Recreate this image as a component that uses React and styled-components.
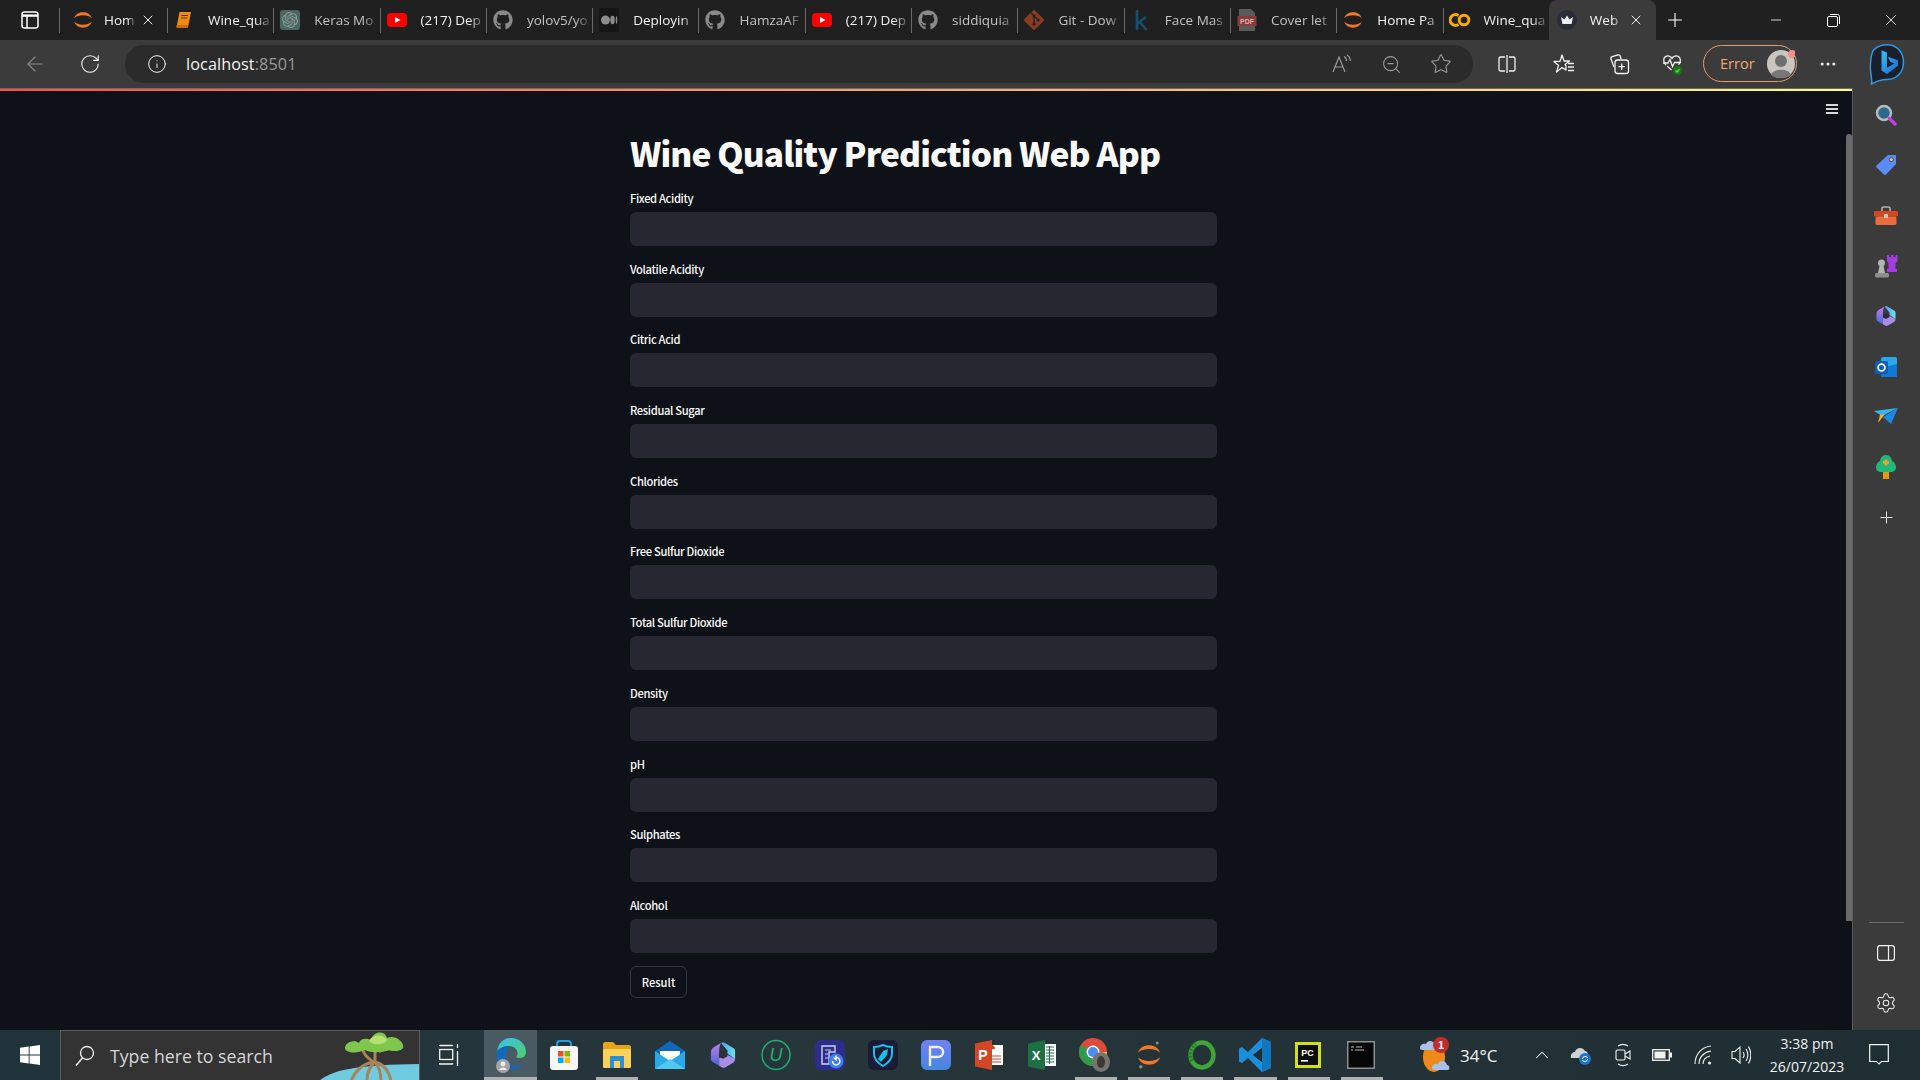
import React from "react";
import styled, { createGlobalStyle } from "styled-components";
import {
  ArrowLeft,
  RotateCw,
  Info,
  Star,
  ZoomOut,
  Plus,
  X,
  Minus,
  Settings,
  ChevronUp,
  Ellipsis,
} from "lucide-react";
import { FaGithub } from "react-icons/fa";
import { SiOpenai, SiGit } from "react-icons/si";

const UI_FONT = `"Open Sans", "Noto Sans", sans-serif`;
const APP_FONT = `"Noto Sans CJK SC", "Noto Sans", sans-serif`;

const GlobalStyle = createGlobalStyle`
  html, body {
    margin: 0;
    padding: 0;
    background: #0e1117;
    overflow: hidden;
  }
  * {
    box-sizing: border-box;
  }
`;

/* ---------- small logos ---------- */

const Jupyter = ({ size = 22, dots }) => (
  <svg width={size} height={size} viewBox="0 0 24 24">
    <path d="M2.500 10C5 1.500 19 1.500 21.500 10C17.500 5.800 6.500 5.800 2.500 10Z" fill="#f37726" />
    <path d="M2.500 14C5 22.500 19 22.500 21.500 14C17.500 18.200 6.500 18.200 2.500 14Z" fill="#f37726" />
    {dots && <circle cx="19" cy="1.800" r="1.300" fill="#8a8a8a" />}
    {dots && <circle cx="5" cy="22" r="1.500" fill="#8a8a8a" />}
  </svg>
);

const Book = () => (
  <svg width="20" height="20" viewBox="0 0 20 20">
    <path d="M5.500 2H17L14.500 15H3Z" fill="#f08c16" />
    <path d="M3 15H14.500L14 18H3.400C1.800 18 2 15.400 3 15Z" fill="#c96d0a" />
    <path d="M7.500 5.500H14M7 8H13.400" stroke="#5a3200" strokeWidth="1.200" />
  </svg>
);

const OpenAiTile = () => (
  <TileBox $bg="#4a6660" $color="#8f9c98" $size={20} $radius={3}>
    <SiOpenai size={16} />
  </TileBox>
);

const YouTube = () => (
  <svg width="20" height="20" viewBox="0 0 20 20">
    <rect y="3" width="20" height="14" rx="4" fill="#f00" />
    <path d="M8 7L13.500 10L8 13Z" fill="#fff" />
  </svg>
);

const MediumTile = () => (
  <svg width="20" height="24" viewBox="0 0 20 24">
    <rect width="20" height="24" rx="2" fill="#151515" />
    <circle cx="6.500" cy="12" r="4.500" fill="#8b8b8b" />
    <ellipse cx="13.500" cy="12" rx="2.200" ry="4.200" fill="#8b8b8b" />
    <ellipse cx="17.500" cy="12" rx="0.800" ry="3.800" fill="#8b8b8b" />
  </svg>
);

const KaggleMark = () => (
  <svg width="14" height="22" viewBox="0 0 14 22" fill="none" stroke="#15506e" strokeWidth="2.600">
    <path d="M3 1V21M12 8L3.500 14.500M5.500 12.500L12.500 21" />
  </svg>
);

const Pdf = () => (
  <svg width="20" height="24" viewBox="0 0 20 24">
    <path d="M2 1H14L18 5V23H2Z" fill="#5a5a5a" />
    <rect x="0.500" y="8" width="19" height="10" fill="#8b3a3a" />
    <text x="10" y="16" fontFamily="Liberation Sans" fontSize="7" fontWeight="700" fill="#d8b4b4" textAnchor="middle">PDF</text>
  </svg>
);

const Colab = () => (
  <svg width="22" height="16" viewBox="0 0 22 16">
    <path d="M9.500 3.500A5.400 5.400 0 1 0 9.500 12.500" fill="none" stroke="#f9ab00" strokeWidth="3" />
    <circle cx="15" cy="8" r="4.800" fill="none" stroke="#f9ab00" strokeWidth="3" />
  </svg>
);

const Crown = () => (
  <svg width="20" height="20" viewBox="0 0 20 20">
    <circle cx="10" cy="10" r="10" fill="#2a2c3a" />
    <path d="M4 7L7.400 9.500L10 5.500L12.600 9.500L16 7L14.600 14H5.400Z" fill="#eee" />
  </svg>
);

const WindowToggle = () => (
  <svg width="18" height="18" viewBox="0 0 18 18" fill="none" stroke="#fff" strokeWidth="1.500">
    <rect x="1" y="1" width="16" height="16" rx="2.500" />
    <path d="M1 4.600H17" strokeWidth="2.400" />
    <path d="M6 5V17" />
  </svg>
);

const Restore = () => (
  <svg width="13" height="13" viewBox="0 0 13 13" fill="none" stroke="#fff">
    <rect x="0.500" y="2.500" width="10" height="10" rx="1.500" />
    <path d="M3 0.500H10.500C11.600 0.500 12.500 1.400 12.500 2.500V10" />
  </svg>
);

const ReadAloud = () => (
  <svg width="22" height="20" viewBox="0 0 22 20" fill="none" stroke="#9a9a9a" strokeWidth="1.200">
    <path d="M2 18L8 3L14 18M4.200 13H11.800" />
    <path d="M13 2.500C15 3.500 15.500 5 15.500 7M16 1C18.600 2.400 19.300 4.500 19.300 7" />
  </svg>
);

const Split = () => (
  <svg width="20" height="20" viewBox="0 0 20 20" fill="none" stroke="#f2f2f2" strokeWidth="1.300">
    <path d="M8 3H3.500C2.700 3 2 3.700 2 4.500V15.500C2 16.300 2.700 17 3.500 17H8M12 3H16.500C17.300 3 18 3.700 18 4.500V15.500C18 16.300 17.300 17 16.500 17H12" />
    <path d="M10 1V19" />
  </svg>
);

const Favorites = () => (
  <svg width="22" height="22" viewBox="0 0 22 22" fill="none" stroke="#f2f2f2" strokeWidth="1.300">
    <path d="M9 2L11 8H16.500L12 11.500L13 13V17L9 14.600L3.500 19L5.600 12.400L1 8.400H7Z" strokeLinejoin="round" />
    <path d="M15 10.500H21M15 14H21M15 17.500H21" />
  </svg>
);

const Collections = () => (
  <svg width="22" height="22" viewBox="0 0 22 22" fill="none" stroke="#f2f2f2" strokeWidth="1.300">
    <path d="M6 14L3 6C2.700 5 3.200 4 4.200 3.700L10 2C11 1.800 12 2.300 12.300 3.300L13 6" />
    <rect x="7" y="7" width="13.500" height="13.500" rx="2.500" />
    <path d="M13.700 10.500V17M10.500 13.700H17" />
  </svg>
);

const Health = () => (
  <svg width="24" height="24" viewBox="0 0 24 24" fill="none" stroke="#f2f2f2" strokeWidth="1.300">
    <path d="M5 13C2 10 2 6 4.500 4.600C7 3.200 9.800 4.200 11 6.400C12.200 4.200 15 3.200 17.500 4.600C20 6 20 10 17.500 12.800" />
    <path d="M2 11H7L9 7.500L11.500 14.500L13.500 10.500H20" />
    <path d="M6 14L10.500 18" />
    <circle cx="16.500" cy="18.500" r="4.500" fill="#107c10" stroke="none" />
    <path d="M14.500 18.500L16 20L18.500 17.300" stroke="#7bd07b" />
  </svg>
);

const Avatar = () => (
  <svg width="28" height="28" viewBox="0 0 28 28">
    <circle cx="14" cy="14" r="14" fill="#c9c6c0" />
    <circle cx="14" cy="11" r="6" fill="#6e6e6c" />
    <path d="M4 25C6 18 22 18 24 25C20 29 8 29 4 25Z" fill="#777" />
    <circle cx="25" cy="4" r="4" fill="#f38f8f" />
  </svg>
);

const Bing = () => (
  <svg width="38" height="42" viewBox="0 0 40 46">
    <defs>
      <linearGradient id="bingb" x1="0" y1="0" x2="1" y2="1">
        <stop offset="0" stopColor="#37bdf8" />
        <stop offset="1" stopColor="#1b66d2" />
      </linearGradient>
    </defs>
    <path
      d="M20 2C31 2 38 10 38 21C38 32 31 40 20 40C14 40 8 42 3 45C4 40 2.500 36 2 31C1.500 26 2 10 6 7C10 3.500 15 2 20 2Z"
      fill="#1a1f2a"
      stroke="#2d9be8"
      strokeWidth="1.600"
    />
    <path d="M14 8L20 10.500V27L28 22.500L23.500 20.500L21 15L32 19V25L20 34L14 30Z" fill="url(#bingb)" />
  </svg>
);

const MenuBars = () => (
  <svg width="12" height="10" viewBox="0 0 12 10" fill="#d8d8d8">
    <rect width="12" height="2" />
    <rect y="4" width="12" height="2" />
    <rect y="8" width="12" height="2" />
  </svg>
);

/* side panel */

const SideSearch = () => (
  <svg width="22" height="22" viewBox="0 0 22 22">
    <circle cx="9" cy="9" r="7" fill="#2b6a8f" stroke="#b8bcc0" strokeWidth="2.400" />
    <path d="M14.500 14.500L20 20" stroke="#c23ee0" strokeWidth="3.400" strokeLinecap="round" />
  </svg>
);

const SideTag = () => (
  <svg width="22" height="22" viewBox="0 0 22 22">
    <path d="M13 1H20C20.600 1 21 1.400 21 2V10L11 20.500C10.400 21 9.600 21 9 20.500L1.500 13.500C1 13 1 12 1.500 11.500Z" fill="#5b8cf5" />
    <circle cx="16.300" cy="5.600" r="2" fill="#f3d23c" stroke="#33418a" />
  </svg>
);

const SideBox = () => (
  <svg width="24" height="20" viewBox="0 0 24 20">
    <path d="M8 5V2.500C8 1.500 9 1 10 1H14C15 1 16 1.500 16 2.500V5" fill="none" stroke="#b0b0b0" strokeWidth="1.600" />
    <rect y="5" width="24" height="5.500" rx="1" fill="#d3471f" />
    <rect x="1.500" y="10.500" width="21" height="8.500" rx="1.400" fill="#ea6b3f" />
    <rect x="10" y="8" width="4" height="4" rx="1" fill="#c8c8c8" />
  </svg>
);

const SideChess = () => (
  <svg width="24" height="24" viewBox="0 0 24 24">
    <path d="M13 1H15V3H17V1H19.500V3H21.500V1H23.500V7L21.500 9V15H23V18H13V15H14.500V9L13 7Z" fill="#a43ce0" />
    <circle cx="7.500" cy="9" r="3.500" fill="#b4b4b4" />
    <path d="M5.500 12H9.500L11 19H4Z" fill="#b4b4b4" />
    <rect x="1" y="19" width="14" height="4.500" rx="1.500" fill="#8f8f8f" />
  </svg>
);

const Copilot = ({ size = 22 }) => (
  <svg width={size} height={size} viewBox="0 0 22 22">
    <defs>
      <linearGradient id={`cpa${size}`} x1="0" y1="0" x2="0" y2="1">
        <stop offset="0" stopColor="#c17ee8" />
        <stop offset="1" stopColor="#4a68d8" />
      </linearGradient>
      <linearGradient id={`cpb${size}`} x1="0" y1="0" x2="1" y2="0">
        <stop offset="0" stopColor="#4ea0f0" />
        <stop offset="1" stopColor="#6fe0f0" />
      </linearGradient>
    </defs>
    <path d="M9.500 1.500C10.500 1 11.500 1 12.500 1.500L19 5.500C20 6 20.500 7 20.500 8V14L14.500 10V7.500Z" fill={`url(#cpb${size})`} />
    <path d="M9.500 1.500L4 4.800C2.500 5.800 1.500 7 1.500 9V13.500C1.500 15 2.200 16 3.500 16.800L8 19.500V8C8 5 8.500 3 9.500 1.500Z" fill={`url(#cpa${size})`} />
    <path d="M8 19.500L10 20.600C11 21.200 12 21.200 13 20.600L19 17C20 16.400 20.500 15.500 20.500 14L13.500 10.500L8 13.500Z" fill="#a98ce6" />
    <path d="M8 9.800L11 8L14.500 10L14.500 12L11 14L8 12.500Z" fill="#2c3138" />
  </svg>
);

const SideOutlook = () => (
  <svg width="22" height="22" viewBox="0 0 22 22">
    <rect x="6" y="1" width="16" height="20" rx="1.500" fill="#28a8ea" />
    <path d="M6 12L22 8V21H7.500C6.700 21 6 20.300 6 19.500Z" fill="#0f78d4" />
    <rect y="5" width="13" height="13" rx="1.600" fill="#0a5fb4" />
    <circle cx="6.500" cy="11.500" r="3.400" fill="none" stroke="#fff" strokeWidth="1.700" />
  </svg>
);

const SideSend = () => (
  <svg width="24" height="18" viewBox="0 0 24 18">
    <path d="M0 3L24 0L8 8Z" fill="#35b6f2" />
    <path d="M24 0L17 16L9 9Z" fill="#1d89e6" />
    <path d="M6 7L11 6L4 15Z" fill="#f3b11c" />
  </svg>
);

const SideTree = () => (
  <svg width="20" height="24" viewBox="0 0 20 24">
    <rect x="7" y="16" width="6" height="8" fill="#e19a0c" />
    <path d="M10 0C14 0 15.500 3 16 6C18.500 7 20 10 20 12.500C20 15.500 17.500 17 15 17H5C2.500 17 0 15.500 0 12.500C0 10 1.500 7 4 6C4.500 3 6 0 10 0Z" fill="#21b77a" />
    <path d="M10 4.500V10.500M7 7.500H13" stroke="#f3a41c" strokeWidth="2.400" />
  </svg>
);

const SidePanelIcon = () => (
  <svg width="18" height="16" viewBox="0 0 18 16" fill="none" stroke="#f2f2f2" strokeWidth="1.200">
    <rect x="0.600" y="0.600" width="16.800" height="14.800" rx="2.400" />
    <path d="M11.500 0.600V15.400" />
  </svg>
);

/* taskbar */

const WinLogo = () => (
  <svg width="20" height="20" viewBox="0 0 20 20" fill="#fff">
    <path d="M0 2.800L8.700 1.600V9.500H0ZM9.600 1.500L20 0V9.500H9.600ZM0 10.500H8.700V18.500L0 17.300ZM9.600 10.500H20V20L9.600 18.600Z" />
  </svg>
);

const SearchGlass = () => (
  <svg width="20" height="22" viewBox="0 0 20 22" fill="none" stroke="#f0f0f0" strokeWidth="1.300">
    <circle cx="12" cy="8" r="6.500" />
    <path d="M7.500 13L1 20.500" strokeWidth="1.600" />
  </svg>
);

const SearchArt = () => (
  <svg width="100" height="50" viewBox="0 0 100 50">
    <path d="M0 50C14 38 40 34 100 33V50Z" fill="#6fcbe0" />
    <path d="M44 19C46 27 52 28 54 31C44 33 36 40 32 50M56 18L56 31C50 36 48 42 48 50M56 31C60 36 62 42 62 50M56 31C64 33 70 40 72 50" fill="none" stroke="#a8845a" strokeWidth="3" />
    <path d="M60 21C64 18 72 18 78 19" fill="none" stroke="#a8845a" strokeWidth="2.400" />
    <path d="M26 17C26 11 36 8 40 12C42 6 50 8 52 9C54 0 66 -1 68 7C74 4 82 8 84 14C86 20 76 21 70 19C62 22 52 22 46 19C38 23 26 22 26 17Z" fill="#7fc74c" />
    <path d="M50 10C54 3 64 3 68 9C66 14 54 15 50 10Z" fill="#b6e070" />
  </svg>
);

const TaskView = () => (
  <svg width="20" height="24" viewBox="0 0 20 24" fill="none" stroke="#f2f2f2" strokeWidth="1.300">
    <rect x="0.700" y="6.500" width="13" height="10" />
    <path d="M0.500 2.500H13.500M0.500 21H13.500M0.500 2V3M13.500 2V3M0.500 20V21.500M13.500 20V21.500M18.500 1V5M18.500 8V23" />
  </svg>
);

const Edge = () => (
  <svg width="30" height="36" viewBox="0 0 30 36">
    <defs>
      <linearGradient id="edgea" x1="0" y1="0" x2="1" y2="1">
        <stop offset="0" stopColor="#35c1f1" />
        <stop offset="1" stopColor="#50d068" />
      </linearGradient>
    </defs>
    <path d="M1 15C2 5 9 1 15 1C24 1 30 8 30 15C30 21 24 22 20 20C24 16 20 9 13 9C7 9 2 12 1 15Z" fill="url(#edgea)" />
    <path d="M1 15C-1 24 5 32 16 32C21 32 25 30 27 27C21 30 14 29 11 23C9 18 11 12 13 9C7 9 2 12 1 15Z" fill="#1368b8" />
    <circle cx="7" cy="29" r="7" fill="#a4a4a4" />
    <circle cx="7" cy="27" r="2.400" fill="#ececec" />
    <path d="M3 33C4 29.500 10 29.500 11 33Z" fill="#ececec" />
  </svg>
);

const Store = () => (
  <svg width="28" height="30" viewBox="0 0 28 30">
    <path d="M7 8V4C7 2 8.500 1 10 1H18C19.500 1 21 2 21 4V8" fill="none" stroke="#18a0e0" strokeWidth="2" />
    <rect y="6" width="28" height="24" rx="3" fill="#f6f6f6" />
    <rect x="8" y="11" width="5.500" height="5.500" fill="#e8502c" />
    <rect x="14.500" y="11" width="5.500" height="5.500" fill="#7fba00" />
    <rect x="8" y="17.500" width="5.500" height="5.500" fill="#00a4ef" />
    <rect x="14.500" y="17.500" width="5.500" height="5.500" fill="#ffb900" />
  </svg>
);

const Explorer = () => (
  <svg width="28" height="26" viewBox="0 0 28 26">
    <path d="M0 2C0 1 1 0 2 0H10L13 3H26C27 3 28 4 28 5V24C28 25 27 26 26 26H2C1 26 0 25 0 24Z" fill="#e6a519" />
    <rect y="7" width="28" height="19" rx="1.500" fill="#fad25a" />
    <path d="M7 14H21V26H17V19H11V26H7Z" fill="#2a8fd8" />
  </svg>
);

const Mail = () => (
  <svg width="30" height="28" viewBox="0 0 30 28">
    <path d="M0 10L15 0L30 10V14H0Z" fill="#1068b8" />
    <path d="M5 10H25V18L15 22L5 18Z" fill="#fff" />
    <path d="M0 10L15 20L30 10V28H0Z" fill="#2aa8e8" />
    <path d="M0 28L15 18L30 28Z" fill="#50c8f2" />
  </svg>
);

const CircleU = () => (
  <svg width="32" height="32" viewBox="0 0 32 32">
    <ellipse cx="16" cy="16" rx="14" ry="14.500" fill="none" stroke="#1db070" strokeWidth="1.500" />
    <text x="16" y="22" fontFamily="Liberation Sans" fontStyle="italic" fontSize="18" fill="#1db070" textAnchor="middle">U</text>
  </svg>
);

const Restorer = () => (
  <svg width="30" height="30" viewBox="0 0 30 30">
    <rect width="30" height="30" rx="6" fill="#2d2d8c" />
    <path d="M7 6H20V12H14V24H7Z" fill="none" stroke="#d0d4f0" strokeWidth="1.400" />
    <path d="M10 10H16M10 14H13M10 18H13" stroke="#d0d4f0" />
    <circle cx="21" cy="21" r="7.500" fill="#3e7ef0" />
    <path d="M17.500 21A3.700 3.700 0 1 0 21 17.500M21 15.500V19.500L18.500 17.500" fill="none" stroke="#fff" strokeWidth="1.400" />
  </svg>
);

const Shield = () => (
  <svg width="30" height="30" viewBox="0 0 30 30">
    <rect width="30" height="30" rx="6" fill="#1b1b35" />
    <path d="M6 7C10 7 13 6 15 5C17 6 20 7 24 7V14C24 19 20 23 15 26C10 23 6 19 6 14Z" fill="none" stroke="#18c0ea" strokeWidth="2" />
    <path d="M20 9L15 11L10 19L13 22L19 15Z" fill="#18c0ea" />
  </svg>
);

const PTile = () => (
  <svg width="30" height="30" viewBox="0 0 30 30">
    <defs>
      <linearGradient id="ptile" x1="0" y1="0" x2="0" y2="1">
        <stop offset="0" stopColor="#7080f4" />
        <stop offset="1" stopColor="#4488de" />
      </linearGradient>
    </defs>
    <rect width="30" height="30" rx="6" fill="url(#ptile)" />
    <path d="M9 26V7H16.500C24 7 24 17 16.500 17H9" fill="none" stroke="#eef" strokeWidth="2.400" />
  </svg>
);

const Ppt = () => (
  <svg width="28" height="30" viewBox="0 0 28 30">
    <rect x="12" y="5" width="16" height="20" fill="#fff" />
    <path d="M16 13A4 4 0 1 1 20 9H16Z" fill="#d24726" />
    <path d="M16 16H26M16 19H26M16 22H26" stroke="#d24726" />
    <path d="M17 0L0 3.500V26.500L17 30Z" fill="#d24726" />
    <text x="8" y="20" fontFamily="Liberation Sans" fontWeight="700" fontSize="14" fill="#fff" textAnchor="middle">P</text>
  </svg>
);

const Excel = () => (
  <svg width="28" height="30" viewBox="0 0 28 30">
    <rect x="12" y="4" width="16" height="22" fill="#fff" />
    <path d="M18 7H26M18 10H26M18 13H26M18 16H26M18 19H26M18 22H26M21.500 6V24" stroke="#1d7044" />
    <path d="M17 0L0 3.500V26.500L17 30Z" fill="#1d7044" />
    <text x="8" y="20" fontFamily="Liberation Sans" fontWeight="700" fontSize="13" fill="#fff" textAnchor="middle">X</text>
  </svg>
);

const Chrome = () => (
  <svg width="32" height="34" viewBox="0 0 32 34">
    <circle cx="14" cy="14" r="14" fill="#dd4b3a" />
    <path d="M14 14L28 14A14 14 0 0 1 14 28Z" fill="#fbc02d" />
    <path d="M14 14L14 28A14 14 0 0 1 2 7Z" fill="#2e9a4b" />
    <circle cx="14" cy="14" r="6.500" fill="#fff" />
    <circle cx="14" cy="14" r="5" fill="#4a8bf5" />
    <ellipse cx="22" cy="24" rx="9" ry="10" fill="#77746f" />
    <ellipse cx="22" cy="24" rx="4" ry="6" fill="#3a3a38" />
  </svg>
);

const GreenRing = () => (
  <svg width="30" height="32" viewBox="0 0 30 32">
    <ellipse cx="15" cy="16" rx="11.500" ry="12.500" fill="none" stroke="#3fa535" strokeWidth="4.500" />
    <path d="M5 22A13 13 0 0 1 9 5" fill="none" stroke="#2b7a2b" strokeWidth="4.500" strokeDasharray="2 1.500" />
  </svg>
);

const VsCode = () => (
  <svg width="32" height="34" viewBox="0 0 32 34">
    <path d="M23 0L32 4V30L23 34L9 20L3 25L0 23.500V10.500L3 9L9 14ZM23 10L14 17L23 24Z" fill="#1c8fdc" fillRule="evenodd" />
    <path d="M23 0L32 4V30L23 34Z" fill="#0f76c0" />
    <path d="M23 10V24L14 17Z" fill="#1e2c33" />
  </svg>
);

const PyCharm = () => (
  <svg width="26" height="26" viewBox="0 0 26 26">
    <rect width="26" height="26" fill="#cfe01a" />
    <rect x="3" y="3" width="20" height="20" fill="#0c0c0c" />
    <text x="12.500" y="14" fontFamily="Liberation Sans" fontWeight="700" fontSize="9" fill="#fff" textAnchor="middle">PC</text>
    <rect x="6" y="18" width="7" height="1.600" fill="#fff" />
  </svg>
);

const Cmd = () => (
  <svg width="28" height="28" viewBox="0 0 28 28">
    <rect width="28" height="28" fill="#8f8f8f" />
    <rect x="1.500" y="1.500" width="25" height="25" fill="#060606" />
    <path d="M4 6H7M9 6H15M4 9H6M8 9H17" stroke="#bbb" />
  </svg>
);

const Weather = () => (
  <svg width="32" height="38" viewBox="0 0 32 38">
    <ellipse cx="15" cy="21" rx="11" ry="15" fill="#ee8a1a" />
    <path d="M1 12C1 8 5 7 7 8C8 4 15 4 16 9C19 9 20 12 18 14H3C1.500 14 1 13 1 12Z" fill="#a8c0ea" />
    <path d="M13 32C13 28 17 27 19 28C20 24 27 24 28 29C31 29 31 34 29 34H15C14 34 13 33 13 32Z" fill="#a8c0ea" />
    <circle cx="22" cy="9" r="8" fill="#c42b2b" />
    <text x="22" y="13" fontFamily="Liberation Sans" fontWeight="700" fontSize="11" fill="#fff" textAnchor="middle">1</text>
  </svg>
);

const CloudSync = () => (
  <svg width="22" height="22" viewBox="0 0 22 22">
    <path d="M1 14C0 10 3 8 5 8C6 3 13 3 15 7C17 7 19 10 18 14Z" fill="#cfd2d4" />
    <circle cx="15" cy="15" r="6" fill="#1e74d4" />
    <path d="M12.500 15A2.600 2.600 0 0 1 17.500 14M17.500 15A2.600 2.600 0 0 1 12.500 16" fill="none" stroke="#fff" />
  </svg>
);

const Meet = () => (
  <svg width="16" height="24" viewBox="0 0 16 24" fill="none" stroke="#f2f2f2" strokeWidth="1.100">
    <path d="M3 3C6 1 10 1 13 3M3 21C6 23 10 23 13 21" />
    <rect x="1" y="7" width="9" height="10" rx="1.500" />
    <path d="M10 11L15 8V16L10 13" />
  </svg>
);

const Battery = () => (
  <svg width="20" height="12" viewBox="0 0 20 12">
    <rect x="0.700" y="0.700" width="16.600" height="10.600" fill="none" stroke="#f2f2f2" strokeWidth="1.300" />
    <rect x="2.500" y="2.500" width="11" height="7" fill="#f2f2f2" />
    <rect x="18" y="3.500" width="2" height="5" fill="#f2f2f2" />
  </svg>
);

const WifiIcon = () => (
  <svg width="18" height="20" viewBox="0 0 18 20" fill="none" stroke="#f2f2f2" strokeWidth="1.100">
    <path d="M1 19C1 9 8 2 17 1M5 19C5 12 10 7 17 6M9 19C9 15 12 12 16 11" />
    <circle cx="15.500" cy="18" r="1.500" fill="#f2f2f2" stroke="none" />
  </svg>
);

const Volume = () => (
  <svg width="20" height="22" viewBox="0 0 20 22" fill="none" stroke="#f2f2f2" strokeWidth="1.100">
    <path d="M1 7.500H4L9 3V19L4 14.500H1Z" />
    <path d="M12 8C13.500 10 13.500 12 12 14M15 5C17.500 9 17.500 13 15 17M17.500 2.500C20.500 8 20.500 14 17.500 19.500" />
  </svg>
);

const Notification = () => (
  <svg width="20" height="22" viewBox="0 0 20 22" fill="none" stroke="#f4f4f4" strokeWidth="1.200">
    <path d="M0.700 0.700H19.300V17.500H12.500L10 20L7.500 17.500H0.700Z" />
  </svg>
);

/* ---------- browser chrome ---------- */

const Screen = styled.div`
  width: 1920px;
  height: 1080px;
  display: flex;
  flex-direction: column;
  font-family: ${UI_FONT};
  overflow: hidden;
`;

const TabStrip = styled.div`
  height: 40px;
  flex: none;
  display: flex;
  align-items: stretch;
  background: #202020;
  color: #fff;
`;

const TabToggle = styled.div`
  width: 59px;
  display: flex;
  align-items: center;
  padding-left: 21px;
`;

const Tab = styled.div`
  position: relative;
  width: ${(p) => p.$width || 106.3}px;
  flex: none;
  display: flex;
  align-items: center;
  gap: ${(p) => p.$gap || 9}px;
  padding: 0 ${(p) => p.$right || 4}px 0 ${(p) => p.$left || 6}px;
  background: ${(p) => (p.$active ? "#3b3b3b" : "transparent")};
  border-radius: ${(p) => (p.$active ? "8px 8px 0 0" : "0")};

  &::before {
    content: "";
    display: ${(p) => (p.$active ? "none" : "block")};
    position: absolute;
    left: 0;
    top: 8px;
    height: 25px;
    width: 1px;
    background: #6a6a6a;
  }
`;

const TabFavicon = styled.span`
  width: 22px;
  margin-right: 4px;
  flex: none;
  display: flex;
  align-items: center;
  justify-content: center;
  color: ${(p) => p.$color || "#8a8a8a"};
`;

const TabTitle = styled.span`
  flex: 1;
  min-width: 0;
  font-size: 13.500px;
  white-space: nowrap;
  color: ${(p) => (p.$dim ? "#c2c2c2" : "#f2f2f2")};
  mask-image: linear-gradient(90deg, #000 78%, rgba(0, 0, 0, 0.25) 100%);
`;

const NewTab = styled.div`
  margin-left: 5px;
  width: 28px;
  display: flex;
  align-items: center;
  justify-content: center;
`;

const WindowControls = styled.div`
  margin-left: auto;
  display: flex;
  align-items: center;
`;

const WindowButton = styled.span`
  width: 57.500px;
  display: flex;
  justify-content: center;
`;

const TileBox = styled.span`
  width: ${(p) => p.$size}px;
  height: ${(p) => p.$size}px;
  display: inline-flex;
  align-items: center;
  justify-content: center;
  border-radius: ${(p) => p.$radius}px;
  background: ${(p) => p.$bg};
  color: ${(p) => p.$color};
`;

const Toolbar = styled.div`
  height: 48px;
  flex: none;
  display: flex;
  align-items: flex-start;
  padding-top: 5px;
  background: #3b3b3b;
  color: #fff;
`;

const NavButton = styled.span`
  width: ${(p) => p.$width}px;
  height: 38px;
  flex: none;
  display: flex;
  align-items: center;
  justify-content: center;
  color: ${(p) => p.$color || "#f2f2f2"};
`;

const AddressBar = styled.div`
  width: 1348px;
  height: 38px;
  margin-left: 15px;
  flex: none;
  display: flex;
  align-items: center;
  padding-left: 22px;
  border-radius: 19px;
  background: #2b2b2b;
`;

const UrlText = styled.span`
  margin-left: 19px;
  font-size: 16.200px;
  letter-spacing: 0.1px;
  color: #f4f4f4;
`;

const UrlPort = styled.span`
  color: #9a9a9a;
`;

const AddressActions = styled.div`
  margin-left: auto;
  padding-right: 21px;
  display: flex;
  align-items: center;
  gap: 28px;
  color: #9a9a9a;
`;

const ErrorPill = styled.div`
  width: 94px;
  height: 37px;
  flex: none;
  margin-left: 8px;
  display: flex;
  align-items: center;
  justify-content: space-between;
  padding: 0 1px 0 16px;
  border: 1.500px solid #e59c63;
  border-radius: 19px;
  font-size: 14.500px;
  color: #f2a871;
`;

const BingSlot = styled.span`
  width: 56px;
  height: 38px;
  display: flex;
  align-items: center;
  justify-content: center;
`;

/* ---------- page area ---------- */

const Body = styled.div`
  flex: 1;
  min-height: 0;
  display: flex;
`;

const Page = styled.main`
  position: relative;
  flex: 1;
  min-width: 0;
  display: flex;
  flex-direction: column;
  align-items: center;
  padding: 0 5px 0 0;
  background: #0e1117;
  border-top: 1px solid #6a6a6a;
  font-family: ${APP_FONT};
  color: #fafafa;

  &::before {
    content: "";
    align-self: stretch;
    margin-right: -5px;
    height: 2px;
    flex: none;
    background: linear-gradient(90deg, #ff4b4b, #fffd80);
  }
`;

const MenuButton = styled.span`
  position: absolute;
  top: 15px;
  right: 14px;
  display: flex;
`;

const ScrollThumb = styled.div`
  position: absolute;
  top: 45px;
  right: 0;
  bottom: 109px;
  width: 6px;
  border-radius: 3px 3px 0 0;
  background: #6a6a6e;
`;

const Column = styled.div`
  width: 587px;
  display: flex;
  flex-direction: column;
  padding-top: 40px;
`;

const Title = styled.h1`
  margin: 0 0 16px;
  font-size: 33.500px;
  line-height: 44px;
  font-weight: 900;
  letter-spacing: -0.88px;
  white-space: nowrap;
  color: #fafafa;
`;

const Form = styled.form`
  display: flex;
  flex-direction: column;
  gap: 15.700px;
  margin: 0;
`;

const Field = styled.label`
  display: flex;
  flex-direction: column;
  gap: 6px;
`;

const FieldLabel = styled.span`
  font-size: 11.200px;
  line-height: 15px;
  font-weight: 500;
  letter-spacing: -0.35px;
  color: #fafafa;
`;

const FieldInput = styled.input`
  height: 34px;
  padding: 0 10px;
  border: 0;
  outline: 0;
  border-radius: 6px;
  background: #262730;
  color: #fafafa;
  font: inherit;
`;

const ResultButton = styled.button`
  width: 57px;
  height: 32px;
  margin-top: -3px;
  padding: 0;
  border: 1px solid #33363e;
  border-radius: 6px;
  background: #0f1219;
  color: #fafafa;
  font-family: ${APP_FONT};
  font-size: 11.200px;
  font-weight: 500;
`;

/* ---------- right side panel ---------- */

const SidePanel = styled.aside`
  width: 68px;
  flex: none;
  display: flex;
  flex-direction: column;
  align-items: center;
  padding: 2px 0 0;
  background: #3b3b3b;
  border-left: 1px solid #5c5c5c;
`;

const SideSlot = styled.span`
  width: 100%;
  height: ${(p) => p.$height || 50.300}px;
  flex: none;
  display: flex;
  align-items: center;
  justify-content: center;
  padding-right: 1px;
  color: #f2f2f2;
`;

const SideFooter = styled.div`
  margin-top: auto;
  width: 100%;
  display: flex;
  flex-direction: column;
  align-items: center;
  padding-bottom: 2px;
`;

const SideRule = styled.hr`
  width: 35px;
  margin: 0 0 4px;
  border: 0;
  border-top: 1px solid #6b6b6b;
`;

/* ---------- taskbar ---------- */

const Taskbar = styled.footer`
  height: 50px;
  flex: none;
  display: flex;
  align-items: stretch;
  background: linear-gradient(90deg, #21333b 0%, #26363b 40%, #1f2e33 100%);
  color: #f2f2f2;
`;

const StartButton = styled.div`
  width: 60px;
  display: flex;
  align-items: center;
  justify-content: center;
`;

const SearchBox = styled.div`
  width: 360px;
  display: flex;
  align-items: center;
  padding-left: 14px;
  border: 1px solid #5a5a5a;
  border-bottom-width: 0;
  background: #333;
  overflow: hidden;
`;

const SearchHint = styled.span`
  margin-left: 15px;
  flex: 1;
  font-size: 17.700px;
  color: #d6d6d6;
`;

const TaskSlot = styled.div`
  position: relative;
  width: ${(p) => p.$width || 53.200}px;
  flex: none;
  display: flex;
  align-items: center;
  justify-content: center;
  padding-right: ${(p) => p.$shift || 0}px;
  background: ${(p) => (p.$selected ? "#4a5a62" : "transparent")};

  &::after {
    content: "";
    display: ${(p) => (p.$open ? "block" : "none")};
    position: absolute;
    left: ${(p) => (p.$selected ? 0 : 6)}px;
    right: ${(p) => (p.$selected ? 0 : 5)}px;
    bottom: 0;
    height: 3px;
    background: #b0b0b0;
  }
`;

const WeatherWidget = styled.div`
  width: 112px;
  margin-left: 31px;
  flex: none;
  display: flex;
  align-items: center;
  gap: 9px;
  font-size: 17px;
`;

const TrayIcon = styled.span`
  width: ${(p) => p.$width}px;
  flex: none;
  display: flex;
  align-items: center;
  justify-content: center;
`;

const Clock = styled.div`
  width: 88px;
  flex: none;
  display: flex;
  flex-direction: column;
  align-items: center;
  justify-content: center;
  gap: 3px;
  font-size: 14px;
  line-height: 20px;
`;

/* ---------- data ---------- */

const TABS = [
  { title: "Hom", icon: <Jupyter />, width: 108, left: 13, gap: 6, right: 11, close: true },
  { title: "Wine_qua", icon: <Book /> },
  { title: "Keras Mo", icon: <OpenAiTile />, dim: true },
  { title: "(217) Dep", icon: <YouTube /> },
  { title: "yolov5/yo", icon: <FaGithub size={20} />, dim: true },
  { title: "Deployin", icon: <MediumTile /> },
  { title: "HamzaAF", icon: <FaGithub size={20} />, dim: true },
  { title: "(217) Dep", icon: <YouTube /> },
  { title: "siddiquia", icon: <FaGithub size={20} />, dim: true },
  { title: "Git - Dow", icon: <SiGit size={20} color="#8a3a20" />, dim: true },
  { title: "Face Mas", icon: <KaggleMark />, dim: true },
  { title: "Cover let", icon: <Pdf />, dim: true },
  { title: "Home Pa", icon: <Jupyter /> },
  { title: "Wine_qua", icon: <Colab /> },
];

const FIELDS = [
  "Fixed Acidity",
  "Volatile Acidity",
  "Citric Acid",
  "Residual Sugar",
  "Chlorides",
  "Free Sulfur Dioxide",
  "Total Sulfur Dioxide",
  "Density",
  "pH",
  "Sulphates",
  "Alcohol",
];

const SIDE_ICONS = [
  <SideSearch />,
  <SideTag />,
  <SideBox />,
  <SideChess />,
  <Copilot />,
  <SideOutlook />,
  <SideSend />,
  <SideTree />,
  <Plus size={19} strokeWidth={1.2} />,
];

const TASK_APPS = [
  { icon: <Store /> },
  { icon: <Explorer />, open: true },
  { icon: <Mail /> },
  { icon: <Copilot size={28} /> },
  { icon: <CircleU /> },
  { icon: <Restorer /> },
  { icon: <Shield /> },
  { icon: <PTile /> },
  { icon: <Ppt /> },
  { icon: <Excel /> },
  { icon: <Chrome />, open: true },
  { icon: <Jupyter size={28} dots />, open: true },
  { icon: <GreenRing />, open: true },
  { icon: <VsCode />, open: true },
  { icon: <PyCharm />, open: true },
  { icon: <Cmd />, open: true },
];

export default function App() {
  return (
    <Screen>
      <GlobalStyle />
      <TabStrip>
        <TabToggle>
          <WindowToggle />
        </TabToggle>
        {TABS.map((tab, i) => (
          <Tab key={i} $width={tab.width} $left={tab.left} $gap={tab.gap} $right={tab.right}>
            <TabFavicon>{tab.icon}</TabFavicon>
            <TabTitle $dim={tab.dim}>{tab.title}</TabTitle>
            {tab.close && <X size={16} strokeWidth={1.4} />}
          </Tab>
        ))}
        <Tab $active $width={107} $left={7} $gap={8} $right={12}>
          <TabFavicon>
            <Crown />
          </TabFavicon>
          <TabTitle>Web</TabTitle>
          <X size={16} strokeWidth={1.4} />
        </Tab>
        <NewTab>
          <Plus size={22} strokeWidth={1.2} />
        </NewTab>
        <WindowControls>
          <WindowButton>
            <Minus size={16} strokeWidth={1.2} />
          </WindowButton>
          <WindowButton>
            <Restore />
          </WindowButton>
          <WindowButton>
            <X size={18} strokeWidth={1.1} />
          </WindowButton>
        </WindowControls>
      </TabStrip>

      <Toolbar>
        <NavButton $width={70} $color="#8a8a8a">
          <ArrowLeft size={24} strokeWidth={1.1} />
        </NavButton>
        <NavButton $width={40}>
          <RotateCw size={22} strokeWidth={1.2} />
        </NavButton>
        <AddressBar>
          <Info size={20} strokeWidth={1.2} color="#f2f2f2" />
          <UrlText>
            localhost<UrlPort>:8501</UrlPort>
          </UrlText>
          <AddressActions>
            <ReadAloud />
            <ZoomOut size={21} strokeWidth={1.2} />
            <Star size={22} strokeWidth={1.2} />
          </AddressActions>
        </AddressBar>
        <NavButton $width={68}>
          <Split />
        </NavButton>
        <NavButton $width={46}>
          <Favorites />
        </NavButton>
        <NavButton $width={64}>
          <Collections />
        </NavButton>
        <NavButton $width={44}>
          <Health />
        </NavButton>
        <ErrorPill>
          Error
          <Avatar />
        </ErrorPill>
        <NavButton $width={62}>
          <Ellipsis size={20} strokeWidth={1.6} />
        </NavButton>
        <BingSlot>
          <Bing />
        </BingSlot>
      </Toolbar>

      <Body>
        <Page>
          <MenuButton>
            <MenuBars />
          </MenuButton>
          <ScrollThumb />
          <Column>
            <Title>Wine Quality Prediction Web App</Title>
            <Form>
              {FIELDS.map((name) => (
                <Field key={name}>
                  <FieldLabel>{name}</FieldLabel>
                  <FieldInput type="text" />
                </Field>
              ))}
              <ResultButton type="button">Result</ResultButton>
            </Form>
          </Column>
        </Page>
        <SidePanel>
          {SIDE_ICONS.map((icon, i) => (
            <SideSlot key={i}>{icon}</SideSlot>
          ))}
          <SideFooter>
            <SideRule />
            <SideSlot>
              <SidePanelIcon />
            </SideSlot>
            <SideSlot>
              <Settings size={22} strokeWidth={1.1} />
            </SideSlot>
          </SideFooter>
        </SidePanel>
      </Body>

      <Taskbar>
        <StartButton>
          <WinLogo />
        </StartButton>
        <SearchBox>
          <SearchGlass />
          <SearchHint>Type here to search</SearchHint>
          <SearchArt />
        </SearchBox>
        <TaskSlot $width={64} $shift={6}>
          <TaskView />
        </TaskSlot>
        <TaskSlot $selected $open $width={53}>
          <Edge />
        </TaskSlot>
        {TASK_APPS.map((app, i) => (
          <TaskSlot key={i} $open={app.open}>
            {app.icon}
          </TaskSlot>
        ))}
        <WeatherWidget>
          <Weather />
          34°C
        </WeatherWidget>
        <TrayIcon $width={22}>
          <ChevronUp size={24} strokeWidth={1.1} />
        </TrayIcon>
        <TrayIcon $width={56}>
          <CloudSync />
        </TrayIcon>
        <TrayIcon $width={28}>
          <Meet />
        </TrayIcon>
        <TrayIcon $width={50}>
          <Battery />
        </TrayIcon>
        <TrayIcon $width={32}>
          <WifiIcon />
        </TrayIcon>
        <TrayIcon $width={44}>
          <Volume />
        </TrayIcon>
        <Clock>
          <span>3:38 pm</span>
          <span>26/07/2023</span>
        </Clock>
        <TrayIcon $width={56}>
          <Notification />
        </TrayIcon>
      </Taskbar>
    </Screen>
  );
}
